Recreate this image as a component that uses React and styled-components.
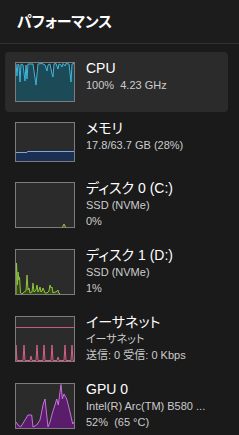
import React from "react";
import styled, { createGlobalStyle } from "styled-components";

const Global = createGlobalStyle`
  html, body { margin: 0; padding: 0; background: #1a1a1a; }
  body {
    font-family: "Liberation Sans", "Noto Sans CJK JP", sans-serif;
    font-feature-settings: "palt";
    -webkit-font-smoothing: antialiased;
  }
`;

const Page = styled.div`
  width: 239px;
  height: 435px;
  overflow: hidden;
  background: #1a1a1a;
  display: flex;
  flex-direction: column;
`;

const Header = styled.header`
  height: 44px;
  flex: none;
  box-sizing: border-box;
  display: flex;
  align-items: center;
  padding: 0 0 2px 17px;
  background: #1c1c1c;
  border-bottom: 1px solid #303030;
`;

const Title = styled.h1`
  margin: 0;
  font-size: 15px;
  font-weight: 700;
  color: #ffffff;
  font-family: "Noto Sans CJK JP", sans-serif;
  font-feature-settings: "palt";
  letter-spacing: -0.2px;
`;

const List = styled.div`
  display: flex;
  flex-direction: column;
  padding: 8px 11px 0 5px;
`;

const Item = styled.div`
  display: flex;
  align-items: flex-start;
  gap: 11px;
  padding: 10px;
  border-radius: 4px;
  background: ${(p) => (p.$selected ? "#2b2b2b" : "transparent")};
`;

const Thumb = styled.div`
  flex: none;
  width: 60px;
  height: ${(p) => p.$h}px;
  box-sizing: border-box;
  border: 1px solid #7c7c7c;
  background: #2b2b2b;
  display: flex;
`;

const Info = styled.div`
  display: flex;
  flex-direction: column;
  margin-top: -2px;
  min-width: 0;
`;

const Name = styled.div`
  font-size: 14px;
  line-height: 17px;
  color: #ffffff;
  white-space: nowrap;
`;

const Sub = styled.div`
  font-size: 11px;
  line-height: 16px;
  color: #cccccc;
  white-space: nowrap;
`;

const Graph = styled.svg`
  display: block;
  width: 58px;
  height: ${(p) => p.$h}px;
`;

const toStr = (pts) => pts.map(([x, y]) => `${x},${y}`).join(" ");

function LineGraph({ h, pts, line, fill, extra }) {
  const area = [...pts, [pts[pts.length - 1][0], h], [pts[0][0], h]];
  return (
    <Graph $h={h} viewBox={`0 0 58 ${h}`}>
      {extra}
      <polygon points={toStr(area)} fill={fill} />
      <polyline points={toStr(pts)} fill="none" stroke={line} strokeWidth="1" strokeLinejoin="round" />
    </Graph>
  );
}

const cpuPts = [
  [0, 1], [1, 13], [2, 1], [3, 2], [4, 19], [5, 1], [7, 2], [9, 18], [10, 2], [11, 16], [12, 1],
  [17, 1], [20, 22], [22, 1], [26, 0.5], [29, 2], [31, 8], [32, 2], [34, 1], [36, 11], [37, 14],
  [38, 1], [40, 0.5], [42, 6], [43, 1], [45, 2], [46, 4], [47, 0.5], [49, 3], [50, 0.5], [53, 1],
  [55, 19], [56, 1], [58, 0.5],
];

const memPts = [[0, 29.5], [11, 29.5], [11.5, 28.5], [58, 28.5]];

const disk0Pts = [[46.5, 44], [48, 41], [49.5, 44]];

const disk1Pts = [
  [0, 44], [0.5, 13], [1.5, 35], [2, 22], [3, 30], [3.5, 27], [4.5, 43], [6, 44], [7, 43], [8, 42],
  [10, 41], [11, 25], [12, 40], [13, 38], [14, 43], [16, 42], [17, 33], [18, 42], [20, 40], [21, 35],
  [22, 42], [23, 40], [24, 37], [25, 42], [26, 41], [27, 38], [29, 43], [31, 43], [33, 41], [34, 35],
  [35, 38], [36, 37], [37, 43], [39, 42], [40, 42], [42, 40], [43, 43.5], [44, 43.5],
];

const spikes = [[0, 28], [8, 28], [15, 39], [21, 28], [28, 28], [36, 28], [42, 40], [49, 28], [56, 28]];
const ethPts = (() => {
  const out = [];
  spikes.forEach(([x, y]) => {
    out.push([Math.max(0, x - 1), 43.5], [x, y], [Math.min(58, x + 1), 43.5]);
  });
  out.push([58, 43.5]);
  return out;
})();

const gpuPts = [
  [0, 38], [2, 41], [4.7, 43], [9, 36], [12, 31], [15.7, 31], [17, 43], [20.7, 41], [24, 36],
  [25.7, 28], [27, 21], [29, 15], [30.7, 31], [32, 43], [34, 38], [36.7, 28], [39, 21], [40.7, 15],
  [42.3, 21], [44, 8], [45, 0.5], [46.3, 15], [48, 10], [50.7, 15], [52.3, 21], [54.7, 31],
  [56.7, 40], [58, 38],
];

const items = [
  {
    name: "CPU",
    subs: ["100%\u00a0\u00a04.23 GHz"],
    h: 40,
    selected: true,
    graph: <LineGraph h={38} pts={cpuPts} line="#3fb6dc" fill="#1d4a57" />,
  },
  {
    name: "メモリ",
    subs: ["17.8/63.7 GB (28%)"],
    h: 40,
    graph: <LineGraph h={38} pts={memPts} line="#7ea6de" fill="#1a2f52" />,
  },
  {
    name: "ディスク 0 (C:)",
    subs: ["SSD (NVMe)", "0%"],
    h: 46,
    graph: <LineGraph h={44} pts={disk0Pts} line="#8fc43c" fill="#3b5218" />,
  },
  {
    name: "ディスク 1 (D:)",
    subs: ["SSD (NVMe)", "1%"],
    h: 46,
    graph: <LineGraph h={44} pts={disk1Pts} line="#8fc43c" fill="#34461a" />,
  },
  {
    name: "イーサネット",
    subs: ["イーサネット", "送信: 0 受信: 0 Kbps"],
    h: 46,
    graph: (
      <LineGraph
        h={44}
        pts={ethPts}
        line="#d4608a"
        fill="#52213a"
        extra={<line x1="0" y1="10.5" x2="58" y2="10.5" stroke="#c9587f" strokeWidth="1" />}
      />
    ),
  },
  {
    name: "GPU 0",
    subs: ["Intel(R) Arc(TM) B580 ...", "52%\u00a0\u00a0(65 °C)"],
    h: 46,
    graph: <LineGraph h={44} pts={gpuPts} line="#c971dc" fill="#5a1d6c" />,
  },
];

export default function App() {
  return (
    <Page>
      <Global />
      <Header>
        <Title>パフォーマンス</Title>
      </Header>
      <List>
        {items.map((it) => (
          <Item key={it.name} $selected={it.selected}>
            <Thumb $h={it.h}>{it.graph}</Thumb>
            <Info>
              <Name>{it.name}</Name>
              {it.subs.map((s) => (
                <Sub key={s}>{s}</Sub>
              ))}
            </Info>
          </Item>
        ))}
      </List>
    </Page>
  );
}
